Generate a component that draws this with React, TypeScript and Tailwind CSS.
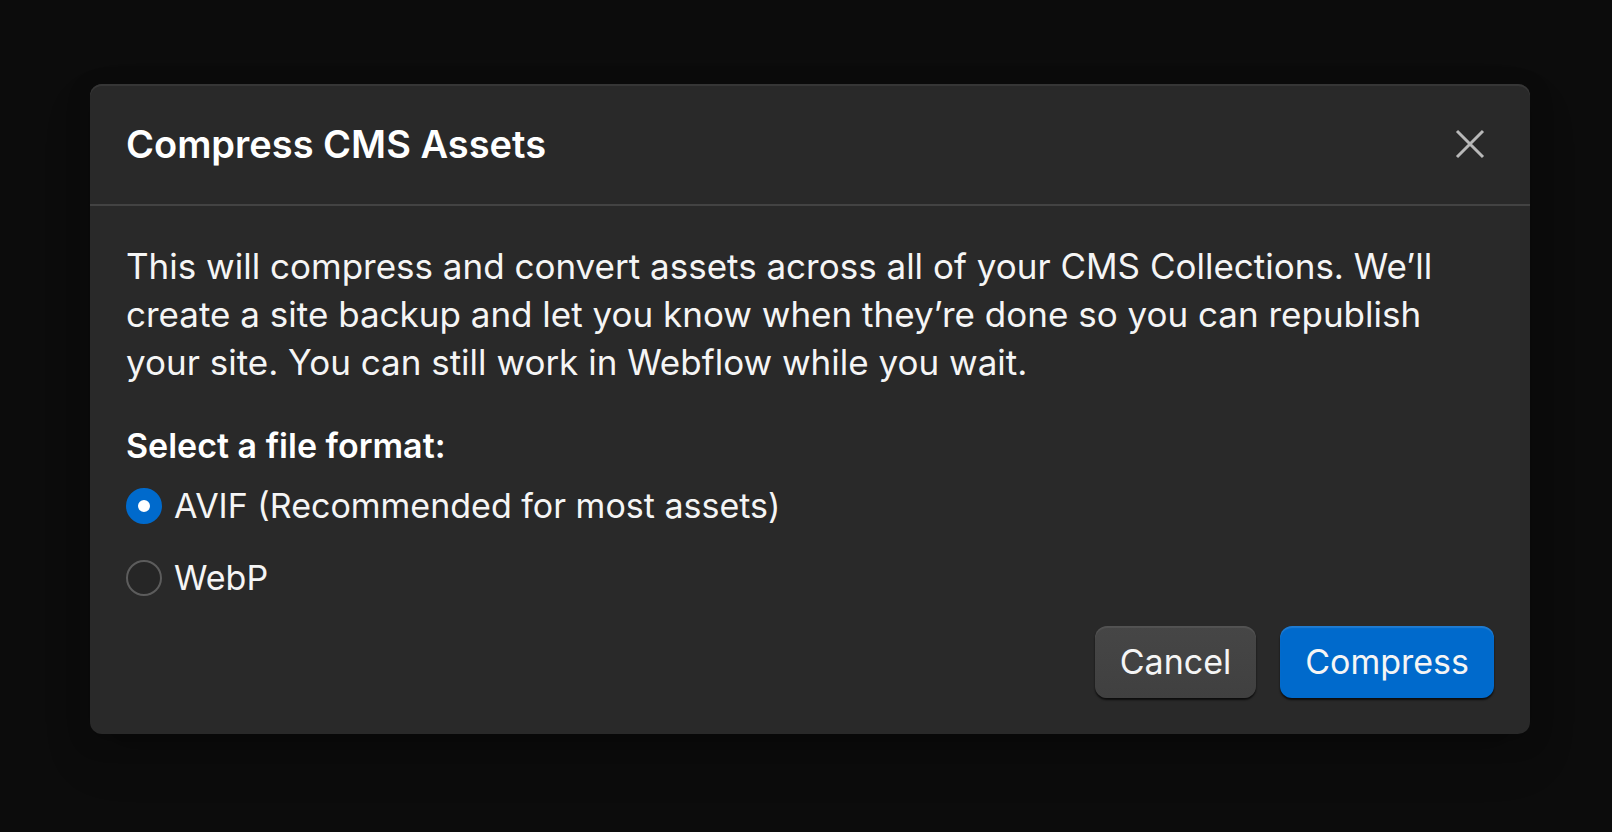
import React, { useState } from 'react';

const formats = [
  { value: 'avif', label: 'AVIF (Recommended for most assets)' },
  { value: 'webp', label: 'WebP' },
];

const App: React.FC = () => {
  const [format, setFormat] = useState('avif');

  return (
    <div className="min-h-screen bg-[#0c0c0c] pt-[84px] pr-[82px] pb-24 pl-[90px] font-['Inter',sans-serif] text-[#f5f5f5]">
      <div
        role="dialog"
        aria-labelledby="dialog-title"
        className="rounded-xl bg-[#292929] shadow-[inset_0_2px_0_#363636,0_24px_48px_rgba(0,0,0,0.15),0_6px_24px_rgba(0,0,0,0.2)]"
      >
        {/* Header */}
        <header className="flex items-center justify-between border-b-2 border-[#434343] px-9 py-9">
          <h1 id="dialog-title" className="text-[38px] leading-[48px] font-semibold text-white">
            Compress CMS Assets
          </h1>
          <button type="button" aria-label="Close" className="flex h-12 w-12 items-center justify-center text-[#b8b8b8]">
            <svg viewBox="0 0 48 48" className="h-12 w-12" fill="none" stroke="currentColor" strokeWidth="3">
              <path d="M11 11l26 26M37 11L11 37" />
            </svg>
          </button>
        </header>

        {/* Body */}
        <div className="px-9 pt-9 pb-9">
          <p className="text-[35px] leading-[48px]">
            This will compress and convert assets across all of your CMS Collections. We’ll create a site backup and let
            you know when they’re done so you can republish your site. You can still work in Webflow while you wait.
          </p>

          <fieldset className="mt-9">
            <legend className="text-[34px] leading-[48px] font-semibold text-white">Select a file format:</legend>
            <div className="mt-3 flex flex-col items-start gap-6">
              {formats.map((item) => (
                <label key={item.value} className="flex items-center gap-3 text-[34px] leading-[48px]">
                  <input
                    type="radio"
                    name="format"
                    value={item.value}
                    checked={format === item.value}
                    onChange={() => setFormat(item.value)}
                    className="h-9 w-9 appearance-none rounded-full border-2 border-[#5c5c5c] bg-[#262626] checked:border-12 checked:border-[#006acc] checked:bg-white"
                  />
                  {item.label}
                </label>
              ))}
            </div>
          </fieldset>

          {/* Actions */}
          <div className="mt-6 flex justify-end gap-6">
            <button
              type="button"
              className="h-[72px] rounded-xl bg-linear-to-b from-[#464646] to-[#404040] px-[25px] text-[34px] leading-[48px] shadow-[inset_0_2px_1px_rgba(255,255,255,0.07),0_2px_2px_rgba(0,0,0,0.7)]"
            >
              Cancel
            </button>
            <button
              type="button"
              className="h-[72px] rounded-xl bg-[#006acc] px-[25px] text-[34px] leading-[48px] shadow-[inset_0_2px_1px_rgba(255,255,255,0.12),0_2px_2px_rgba(0,0,0,0.7)]"
            >
              Compress
            </button>
          </div>
        </div>
      </div>
    </div>
  );
};

export default App;
